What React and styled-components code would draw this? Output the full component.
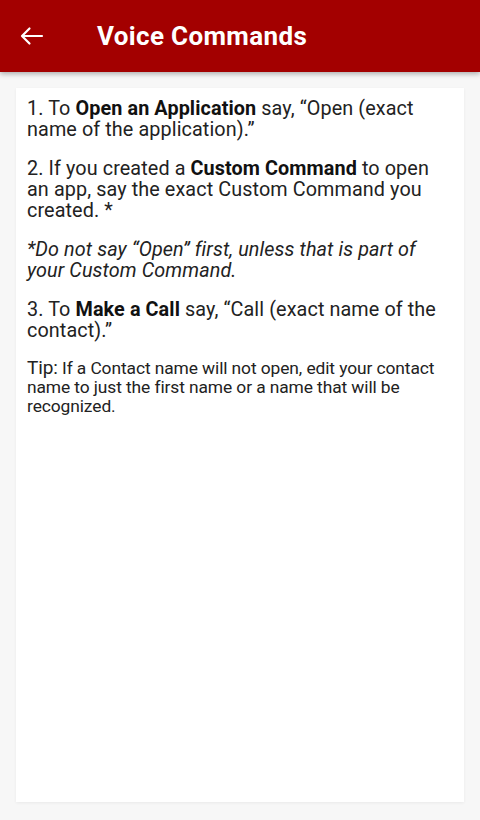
import React from "react";
import styled, { createGlobalStyle } from "styled-components";

const Global = createGlobalStyle`
  html, body { margin: 0; padding: 0; background: #f7f7f7; }
  body { font-family: Roboto, "Noto Sans", sans-serif; }
`;

const Page = styled.div`
  width: 480px;
  height: 820px;
  display: flex;
  flex-direction: column;
  background: #f7f7f7;
  overflow: hidden;
`;

const AppBar = styled.header`
  height: 72px;
  flex: 0 0 72px;
  background: #a30000;
  display: flex;
  align-items: center;
  gap: 52px;
  padding: 0 0 0 19px;
  box-shadow: 0 2px 5px rgba(0, 0, 0, 0.3);
  position: relative;
  z-index: 1;
`;

const BackButton = styled.button`
  width: 26px;
  height: 26px;
  padding: 0;
  border: 0;
  background: transparent;
  display: flex;
  align-items: center;
  justify-content: center;
`;

const Title = styled.h1`
  margin: 0;
  font-size: 26px;
  font-weight: 700;
  color: #ffffff;
  letter-spacing: 0.35px;
`;

const Body = styled.main`
  flex: 1;
  padding: 16px 16px 18px 16px;
  display: flex;
`;

const Card = styled.section`
  flex: 1;
  background: #ffffff;
  box-shadow: 0 1px 3px rgba(0, 0, 0, 0.06);
  padding: 10px 20px 0 11px;
  display: flex;
  flex-direction: column;
  gap: 18px;
  color: #222;
`;

const Para = styled.p`
  margin: 0;
  font-size: ${(p) => (p.$small ? "17.4px" : "19.8px")};
  line-height: ${(p) => (p.$small ? "18.8px" : "21px")};
  font-style: ${(p) => (p.$italic ? "italic" : "normal")};
  letter-spacing: ${(p) => (p.$small ? "-0.1px" : "0.1px")};
  b { font-weight: 700; color: #111; }
`;

const TipLabel = styled.span`
  font-size: 19px;
`;

export default function App() {
  return (
    <>
      <Global />
      <Page>
        <AppBar>
          <BackButton aria-label="Back">
            <svg width="26" height="26" viewBox="0 0 26 26" fill="none">
              <path d="M23 13H3.5M10.5 5.5L3 13l7.5 7.5" stroke="#fff" strokeWidth="2.2" strokeLinecap="round" strokeLinejoin="round" />
            </svg>
          </BackButton>
          <Title>Voice Commands</Title>
        </AppBar>
        <Body>
          <Card>
            <Para>
              1. To <b>Open an Application</b> say, “Open (exact name of the application).”
            </Para>
            <Para>
              2. If you created a <b>Custom Command</b> to open an app, say the exact Custom Command you created. *
            </Para>
            <Para $italic>
              *Do not say “Open” first, unless that is part of your Custom Command.
            </Para>
            <Para>
              3. To <b>Make a Call</b> say, “Call (exact name of the contact).”
            </Para>
            <Para $small>
              <TipLabel>Tip:</TipLabel> If a Contact name will not open, edit your contact name to just the first name or a name that will be recognized.
            </Para>
          </Card>
        </Body>
      </Page>
    </>
  );
}
